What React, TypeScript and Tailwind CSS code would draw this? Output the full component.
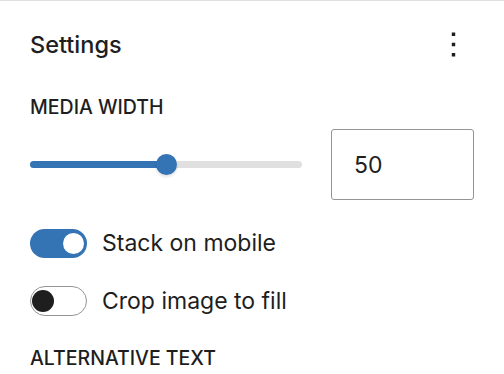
import React from 'react';

const BLUE = 'bg-[#3474b5]';

function MoreVertical() {
  return (
    <svg width="41" height="41" viewBox="0 0 24 24" fill="#1e1e1e" aria-hidden>
      <path d="M13 19h-2v-2h2v2zm0-6h-2v-2h2v2zm0-6h-2V5h2v2z" />
    </svg>
  );
}

function Toggle({ checked }: { checked: boolean }) {
  return checked ? (
    <div className={`w-[57px] h-[29px] rounded-full ${BLUE} flex items-center justify-end pr-[3px] shrink-0`}>
      <div className="w-[21px] h-[21px] rounded-full bg-white" />
    </div>
  ) : (
    <div className="w-[57px] h-[30px] rounded-full bg-white border-[1.5px] border-[#949494] flex items-center pl-[1px] shrink-0">
      <div className="w-[22px] h-[22px] rounded-full bg-[#1e1e1e]" />
    </div>
  );
}

export default function App() {
  const [width, setWidth] = React.useState(50);

  return (
    <div className="w-[504px] h-[374px] overflow-hidden bg-white border-t border-[#e0e0e0] text-[#1e1e1e] font-['Inter','Noto_Sans',sans-serif]">
      <div className="flex items-center justify-between pl-[30px] pr-[30px] pt-[23px]">
        <h2 className="text-[23.5px] leading-[41px] font-medium">Settings</h2>
        <MoreVertical />
      </div>

      <div className="pl-[30px] pr-[30px] mt-[31px]">
        <div className="text-[19.5px] leading-[22px] font-medium uppercase">Media width</div>

        <div className="flex items-center mt-[11px]">
          <div className="relative w-[272px] h-[7px] rounded-full bg-[#e0e0e0]">
            <div className={`h-full rounded-full ${BLUE}`} style={{ width: `${width}%` }} />
            <div
              className={`absolute top-1/2 w-[21px] h-[21px] -mt-[10.5px] -ml-[10.5px] rounded-full ${BLUE} shadow-[0_2px_3px_rgba(0,0,0,0.12)]`}
              style={{ left: `${width}%` }}
            />
          </div>
          <input
            type="number"
            value={width}
            onChange={(e) => setWidth(Number(e.target.value))}
            className="ml-[29px] w-[143px] h-[71px] rounded-[3px] border border-[#949494] pl-[22px] text-[23px] outline-none appearance-none [&::-webkit-inner-spin-button]:appearance-none"
          />
        </div>

        <div className="flex items-center gap-[15px] mt-[29px]">
          <Toggle checked />
          <span className="text-[23px] leading-[29px]">Stack on mobile</span>
        </div>

        <div className="flex items-center gap-[15px] mt-[28px]">
          <Toggle checked={false} />
          <span className="text-[23px] leading-[30px]">Crop image to fill</span>
        </div>

        <div className="text-[19.5px] leading-[22px] font-medium uppercase mt-[31px]">Alternative text</div>
      </div>
    </div>
  );
}
